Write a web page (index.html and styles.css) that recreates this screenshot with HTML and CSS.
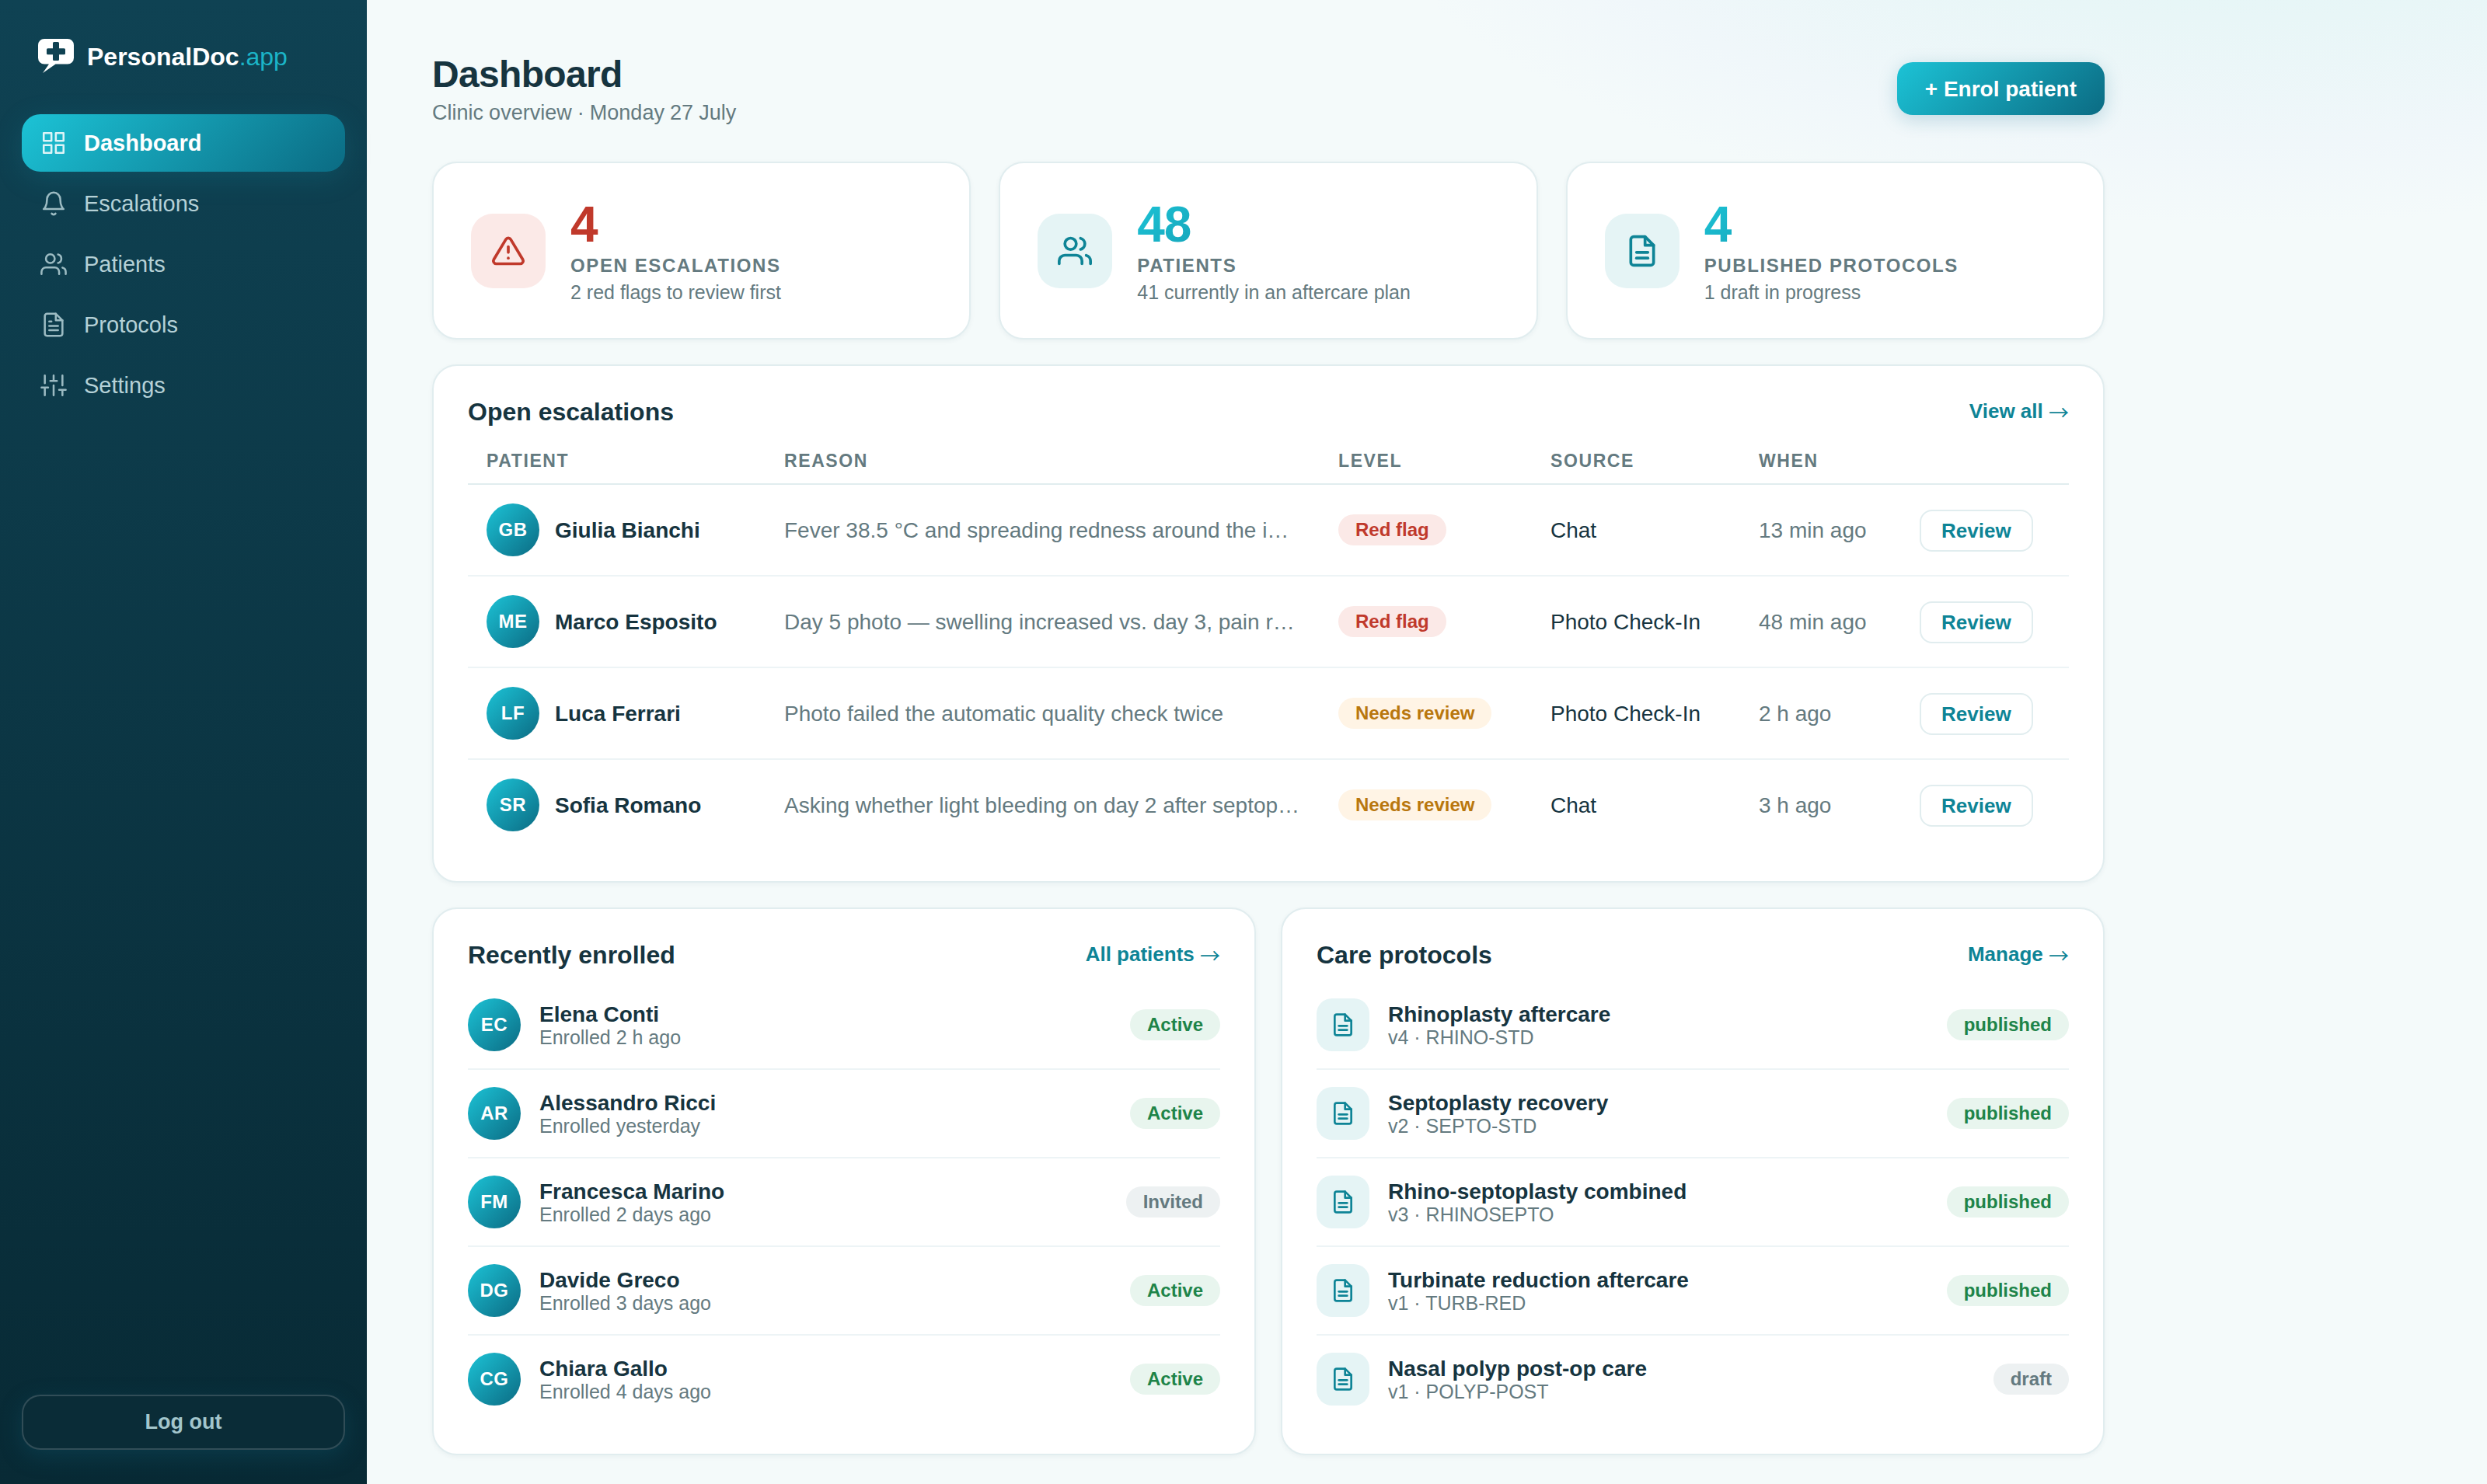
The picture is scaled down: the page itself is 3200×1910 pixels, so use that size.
FILE: index.html
```
<!DOCTYPE html>
<html lang="en">
<head>
    <meta charset="UTF-8">
    <meta name="viewport" content="width=device-width, initial-scale=1.0">
    <title>Dashboard - PersonalDoc.app</title>
    <link rel="stylesheet" href="styles.css">
</head>
<body>
    <svg class="sprite" aria-hidden="true">
        <symbol id="icon-grid" viewBox="0 0 24 24">
            <rect x="3" y="3" width="7" height="7"/><rect x="14" y="3" width="7" height="7"/>
            <rect x="14" y="14" width="7" height="7"/><rect x="3" y="14" width="7" height="7"/>
        </symbol>
        <symbol id="icon-bell" viewBox="0 0 24 24">
            <path d="M18 8A6 6 0 0 0 6 8c0 7-3 9-3 9h18s-3-2-3-9"/><path d="M13.73 21a2 2 0 0 1-3.46 0"/>
        </symbol>
        <symbol id="icon-users" viewBox="0 0 24 24">
            <path d="M17 21v-2a4 4 0 0 0-4-4H5a4 4 0 0 0-4 4v2"/><circle cx="9" cy="7" r="4"/>
            <path d="M23 21v-2a4 4 0 0 0-3-3.87"/><path d="M16 3.13a4 4 0 0 1 0 7.75"/>
        </symbol>
        <symbol id="icon-file-text" viewBox="0 0 24 24">
            <path d="M14 2H6a2 2 0 0 0-2 2v16a2 2 0 0 0 2 2h12a2 2 0 0 0 2-2V8z"/><path d="M14 2v6h6"/>
            <path d="M16 13H8"/><path d="M16 17H8"/><path d="M10 9H8"/>
        </symbol>
        <symbol id="icon-file" viewBox="0 0 24 24">
            <path d="M14 2H6a2 2 0 0 0-2 2v16a2 2 0 0 0 2 2h12a2 2 0 0 0 2-2V8z"/><path d="M14 2v6h6"/>
            <path d="M16 13H8"/><path d="M16 17H8"/>
        </symbol>
        <symbol id="icon-sliders" viewBox="0 0 24 24">
            <path d="M4 21v-7M4 10V3M12 21v-9M12 8V3M20 21v-5M20 12V3M1 14h6M9 8h6M17 16h6"/>
        </symbol>
        <symbol id="icon-alert" viewBox="0 0 24 24">
            <path d="M10.29 3.86L1.82 18a2 2 0 0 0 1.71 3h16.94a2 2 0 0 0 1.71-3L13.71 3.86a2 2 0 0 0-3.42 0z"/>
            <path d="M12 9v4"/><path d="M12 17h.01"/>
        </symbol>
    </svg>

    <aside class="sidebar">
        <div class="brand">
            <svg class="brand-logo" viewBox="0 0 46 44">
                <path fill="#fff" fill-rule="evenodd" d="M8 0H38a8 8 0 0 1 8 8V24.500a8 8 0 0 1-8 8H22.500L6 44L14 32.500H8a8 8 0 0 1-8-8V8a8 8 0 0 1 8-8zM20.500 4a1.500 1.500 0 0 0-1.500 1.500V12.250H12.500a1.500 1.500 0 0 0-1.500 1.500V18.750a1.500 1.500 0 0 0 1.500 1.500H19V26.500a1.500 1.500 0 0 0 1.500 1.500H25.500a1.500 1.500 0 0 0 1.500-1.500V20.250H33.500a1.500 1.500 0 0 0 1.500-1.500V13.750a1.500 1.500 0 0 0-1.500-1.500H27V5.500a1.500 1.500 0 0 0-1.500-1.500z"/>
            </svg>
            <div class="brand-name">PersonalDoc<span>.app</span></div>
        </div>
        <nav class="nav">
            <a class="nav-item active"><svg class="icon"><use href="#icon-grid"/></svg>Dashboard</a>
            <a class="nav-item"><svg class="icon"><use href="#icon-bell"/></svg>Escalations</a>
            <a class="nav-item"><svg class="icon"><use href="#icon-users"/></svg>Patients</a>
            <a class="nav-item"><svg class="icon"><use href="#icon-file-text"/></svg>Protocols</a>
            <a class="nav-item"><svg class="icon"><use href="#icon-sliders"/></svg>Settings</a>
        </nav>
        <button class="logout">Log out</button>
    </aside>

    <main class="main">
        <header class="page-head">
            <div>
                <h1>Dashboard</h1>
                <p class="subtitle">Clinic overview · Monday 27 July</p>
            </div>
            <button class="btn-primary">+ Enrol patient</button>
        </header>

        <section class="stats">
            <div class="card stat">
                <div class="stat-icon danger"><svg class="icon"><use href="#icon-alert"/></svg></div>
                <div>
                    <div class="stat-value danger">4</div>
                    <div class="stat-label">Open escalations</div>
                    <div class="stat-note">2 red flags to review first</div>
                </div>
            </div>
            <div class="card stat">
                <div class="stat-icon"><svg class="icon"><use href="#icon-users"/></svg></div>
                <div>
                    <div class="stat-value">48</div>
                    <div class="stat-label">Patients</div>
                    <div class="stat-note">41 currently in an aftercare plan</div>
                </div>
            </div>
            <div class="card stat">
                <div class="stat-icon"><svg class="icon"><use href="#icon-file"/></svg></div>
                <div>
                    <div class="stat-value">4</div>
                    <div class="stat-label">Published protocols</div>
                    <div class="stat-note">1 draft in progress</div>
                </div>
            </div>
        </section>

        <section class="card panel">
            <div class="panel-head">
                <h2>Open escalations</h2>
                <a class="link">View all <span class="arrow">→</span></a>
            </div>
            <table>
                <colgroup>
                    <col class="col-patient"><col class="col-reason"><col class="col-level">
                    <col class="col-source"><col class="col-when"><col>
                </colgroup>
                <thead>
                    <tr><th>Patient</th><th>Reason</th><th>Level</th><th>Source</th><th>When</th><th></th></tr>
                </thead>
                <tbody>
                    <tr>
                        <td><div class="person"><span class="avatar">GB</span><b>Giulia Bianchi</b></div></td>
                        <td class="text muted"><div class="reason">Fever 38.5 °C and spreading redness around the incision</div></td>
                        <td><span class="pill red">Red flag</span></td>
                        <td class="text">Chat</td>
                        <td class="text muted">13 min ago</td>
                        <td><button class="btn-small">Review</button></td>
                    </tr>
                    <tr>
                        <td><div class="person"><span class="avatar">ME</span><b>Marco Esposito</b></div></td>
                        <td class="text muted"><div class="reason">Day 5 photo — swelling increased vs. day 3, pain reported</div></td>
                        <td><span class="pill red">Red flag</span></td>
                        <td class="text">Photo Check-In</td>
                        <td class="text muted">48 min ago</td>
                        <td><button class="btn-small">Review</button></td>
                    </tr>
                    <tr>
                        <td><div class="person"><span class="avatar">LF</span><b>Luca Ferrari</b></div></td>
                        <td class="text muted"><div class="reason">Photo failed the automatic quality check twice</div></td>
                        <td><span class="pill amber">Needs review</span></td>
                        <td class="text">Photo Check-In</td>
                        <td class="text muted">2 h ago</td>
                        <td><button class="btn-small">Review</button></td>
                    </tr>
                    <tr>
                        <td><div class="person"><span class="avatar">SR</span><b>Sofia Romano</b></div></td>
                        <td class="text muted"><div class="reason">Asking whether light bleeding on day 2 after septoplasty</div></td>
                        <td><span class="pill amber">Needs review</span></td>
                        <td class="text">Chat</td>
                        <td class="text muted">3 h ago</td>
                        <td><button class="btn-small">Review</button></td>
                    </tr>
                </tbody>
            </table>
        </section>

        <div class="columns">
            <section class="card panel">
                <div class="panel-head">
                    <h2>Recently enrolled</h2>
                    <a class="link">All patients <span class="arrow">→</span></a>
                </div>
                <ul class="list">
                    <li>
                        <span class="avatar">EC</span>
                        <div class="item-text"><strong>Elena Conti</strong><small>Enrolled 2 h ago</small></div>
                        <span class="pill green">Active</span>
                    </li>
                    <li>
                        <span class="avatar">AR</span>
                        <div class="item-text"><strong>Alessandro Ricci</strong><small>Enrolled yesterday</small></div>
                        <span class="pill green">Active</span>
                    </li>
                    <li>
                        <span class="avatar">FM</span>
                        <div class="item-text"><strong>Francesca Marino</strong><small>Enrolled 2 days ago</small></div>
                        <span class="pill gray">Invited</span>
                    </li>
                    <li>
                        <span class="avatar">DG</span>
                        <div class="item-text"><strong>Davide Greco</strong><small>Enrolled 3 days ago</small></div>
                        <span class="pill green">Active</span>
                    </li>
                    <li>
                        <span class="avatar">CG</span>
                        <div class="item-text"><strong>Chiara Gallo</strong><small>Enrolled 4 days ago</small></div>
                        <span class="pill green">Active</span>
                    </li>
                </ul>
            </section>

            <section class="card panel">
                <div class="panel-head">
                    <h2>Care protocols</h2>
                    <a class="link">Manage <span class="arrow">→</span></a>
                </div>
                <ul class="list">
                    <li>
                        <span class="doc"><svg class="icon"><use href="#icon-file"/></svg></span>
                        <div class="item-text"><strong>Rhinoplasty aftercare</strong><small>v4 · RHINO-STD</small></div>
                        <span class="pill green">published</span>
                    </li>
                    <li>
                        <span class="doc"><svg class="icon"><use href="#icon-file"/></svg></span>
                        <div class="item-text"><strong>Septoplasty recovery</strong><small>v2 · SEPTO-STD</small></div>
                        <span class="pill green">published</span>
                    </li>
                    <li>
                        <span class="doc"><svg class="icon"><use href="#icon-file"/></svg></span>
                        <div class="item-text"><strong>Rhino-septoplasty combined</strong><small>v3 · RHINOSEPTO</small></div>
                        <span class="pill green">published</span>
                    </li>
                    <li>
                        <span class="doc"><svg class="icon"><use href="#icon-file"/></svg></span>
                        <div class="item-text"><strong>Turbinate reduction aftercare</strong><small>v1 · TURB-RED</small></div>
                        <span class="pill green">published</span>
                    </li>
                    <li>
                        <span class="doc"><svg class="icon"><use href="#icon-file"/></svg></span>
                        <div class="item-text"><strong>Nasal polyp post-op care</strong><small>v1 · POLYP-POST</small></div>
                        <span class="pill gray">draft</span>
                    </li>
                </ul>
            </section>
        </div>
    </main>
</body>
</html>
```
FILE: styles.css
```
:root {
    --ink: #16343f;
    --muted: #647a80;
    --teal: #0e8496;
    --line: #e1edef;
    --grad: linear-gradient(135deg, #1cc3d6, #0b6b83);
}
* {
    box-sizing: border-box;
}
body {
    margin: 0;
    display: flex;
    min-height: 1910px;
    font-family: "Liberation Sans", Helvetica, Arial, sans-serif;
    font-size: 28px;
    color: var(--ink);
    background: radial-gradient(1900px 800px at 90% -10%, #def5f5, #e8f6f7 27%, #f0f7fa 47%, rgba(244, 250, 250, 0) 60%), #f4fafa;
}
h1, h2, p, ul {
    margin: 0;
    padding: 0;
}
button {
    font-family: inherit;
    font-weight: bold;
}
.sprite {
    display: none;
}
.icon {
    fill: none;
    stroke: currentColor;
    stroke-width: 2;
    stroke-linecap: round;
    stroke-linejoin: round;
    flex-shrink: 0;
}

/* sidebar */
.sidebar {
    width: 472px;
    flex-shrink: 0;
    display: flex;
    flex-direction: column;
    padding: 50px 28px 44px;
    background: linear-gradient(180deg, #0f4253, #082a35);
}
.brand {
    display: flex;
    gap: 17px;
    height: 97px;
    padding-left: 21px;
}
.brand-logo {
    width: 46px;
    height: 44px;
}
.brand-name {
    font-size: 32px;
    line-height: 46px;
    font-weight: bold;
    color: #fff;
}
.brand-name span {
    font-weight: normal;
    color: #1bb5c8;
}
.nav {
    display: flex;
    flex-direction: column;
    gap: 4px;
    flex: 1;
}
.nav-item {
    display: flex;
    align-items: center;
    gap: 22px;
    height: 74px;
    padding: 0 24px;
    border-radius: 24px;
    font-size: 29px;
    color: #b5d1d7;
}
.nav-item .icon {
    width: 34px;
    height: 34px;
    stroke-width: 1.8;
    opacity: 0.85;
}
.nav-item.active {
    background: var(--grad);
    color: #fff;
    font-weight: bold;
    box-shadow: 0 8px 36px rgba(20, 150, 175, 0.2);
}
.logout {
    height: 71px;
    border: 2px solid rgba(255, 255, 255, 0.16);
    border-radius: 24px;
    background: #0a2c37;
    color: #a3c6cc;
    font-size: 27px;
    box-shadow: 0 8px 28px rgba(14, 90, 112, 0.35);
}

/* main area */
.main {
    width: 2320px;
    padding: 68px 84px 36px;
}
.page-head {
    display: flex;
    justify-content: space-between;
    height: 140px;
}
h1 {
    font-size: 48px;
    line-height: 56px;
    letter-spacing: -0.014em;
}
.subtitle {
    font-size: 27px;
    line-height: 32px;
    margin-top: 5px;
    word-spacing: -0.4px;
    color: var(--muted);
}
.btn-primary {
    height: 68px;
    margin-top: 12px;
    padding: 2px 36px 0;
    border: 0;
    border-radius: 20px;
    background: var(--grad);
    color: #fff;
    font-size: 28px;
    box-shadow: 0 6px 24px rgba(14, 110, 140, 0.22);
}
.card {
    background: #fff;
    border: 2px solid var(--line);
    border-radius: 32px;
    box-shadow: 0 2px 6px rgba(15, 66, 83, 0.05);
}
.stats {
    display: grid;
    grid-template-columns: repeat(3, 1fr);
    gap: 36px;
    margin-bottom: 32px;
}
.stat {
    display: flex;
    align-items: center;
    gap: 32px;
    height: 229px;
    padding: 0 48px;
}
.stat-icon {
    display: flex;
    align-items: center;
    justify-content: center;
    width: 96px;
    height: 96px;
    border-radius: 28px;
    background: #e5f4f5;
    color: var(--teal);
}
.stat-icon.danger {
    background: #fbe9e7;
    color: #c0392b;
}
.stat-icon .icon {
    width: 44px;
    height: 44px;
}
.stat-value {
    font-size: 64px;
    line-height: 64px;
    font-weight: bold;
    letter-spacing: -0.02em;
    background: var(--grad);
    -webkit-background-clip: text;
    background-clip: text;
    color: transparent;
}
.stat-value.danger {
    background: none;
    color: #c0392b;
}
.stat-label {
    margin-top: 6px;
    font-size: 24px;
    line-height: 30px;
    font-weight: bold;
    letter-spacing: 1.6px;
    text-transform: uppercase;
    color: var(--muted);
}
.stat-note {
    margin-top: 6px;
    font-size: 25px;
    line-height: 26px;
    color: var(--muted);
}

/* panels */
.panel {
    padding: 40px 44px;
}
.panel-head {
    display: flex;
    justify-content: space-between;
    height: 53px;
}
h2 {
    font-size: 32px;
    line-height: 38px;
}
.link {
    font-size: 26px;
    line-height: 37px;
    font-weight: bold;
    color: var(--teal);
}
.arrow {
    font-family: "Noto Sans CJK JP", sans-serif;
    font-weight: normal;
    line-height: 1;
    vertical-align: -3px;
}
table {
    width: 100%;
    table-layout: fixed;
    border-collapse: separate;
    border-spacing: 0;
}
.col-patient { width: 383px; }
.col-reason { width: 713px; }
.col-level { width: 273px; }
.col-source { width: 268px; }
.col-when { width: 207px; }
th {
    height: 60px;
    padding: 0 24px;
    border-bottom: 2px solid var(--line);
    font-size: 23px;
    text-align: left;
    letter-spacing: 1.6px;
    text-transform: uppercase;
    color: var(--muted);
}
td {
    height: 118px;
    padding: 0 24px;
    border-bottom: 2px solid #edf4f6;
    white-space: nowrap;
}
tr:last-child td {
    height: 116px;
    border-bottom: 0;
}
td.text {
    padding-top: 2px;
}
.muted {
    color: var(--muted);
}
.reason {
    max-width: 664px;
    overflow: hidden;
    text-overflow: ellipsis;
}
.person {
    display: flex;
    align-items: center;
    gap: 20px;
}
.person b {
    padding-top: 2px;
}
.avatar {
    display: flex;
    align-items: center;
    justify-content: center;
    width: 68px;
    height: 68px;
    border-radius: 50%;
    background: var(--grad);
    color: #fff;
    font-size: 24px;
    font-weight: bold;
    letter-spacing: 0.02em;
}
.pill {
    display: inline-block;
    padding: 0 22px;
    border-radius: 20px;
    font-size: 24px;
    line-height: 40px;
    font-weight: bold;
}
.pill.red {
    background: #fbe9e7;
    color: #c0392b;
}
.pill.amber {
    background: #fff4e5;
    color: #b9770e;
}
.pill.green {
    background: #e8f5ee;
    color: #1e8449;
}
.pill.gray {
    background: #edf1f2;
    color: var(--muted);
}
.btn-small {
    display: block;
    height: 54px;
    margin-top: 2px;
    padding: 0 26px;
    border: 2px solid var(--line);
    border-radius: 16px;
    background: #fff;
    color: var(--teal);
    font-size: 26px;
}
.columns {
    display: grid;
    grid-template-columns: 1fr 1fr;
    gap: 32px;
    margin-top: 32px;
}
.list {
    list-style: none;
}
.list li {
    display: flex;
    align-items: center;
    gap: 24px;
    height: 114px;
    border-bottom: 2px solid #edf4f6;
}
.list li:last-child {
    height: 112px;
    border-bottom: 0;
}
.item-text {
    flex: 1;
}
.item-text strong, .item-text small {
    display: block;
}
.item-text strong {
    font-size: 28px;
    line-height: 33px;
}
.item-text small {
    font-size: 25px;
    line-height: 27px;
    color: var(--muted);
}
.doc {
    display: flex;
    align-items: center;
    justify-content: center;
    width: 68px;
    height: 68px;
    border-radius: 20px;
    background: #e5f4f5;
    color: var(--teal);
}
.doc .icon {
    width: 32px;
    height: 32px;
}
```
